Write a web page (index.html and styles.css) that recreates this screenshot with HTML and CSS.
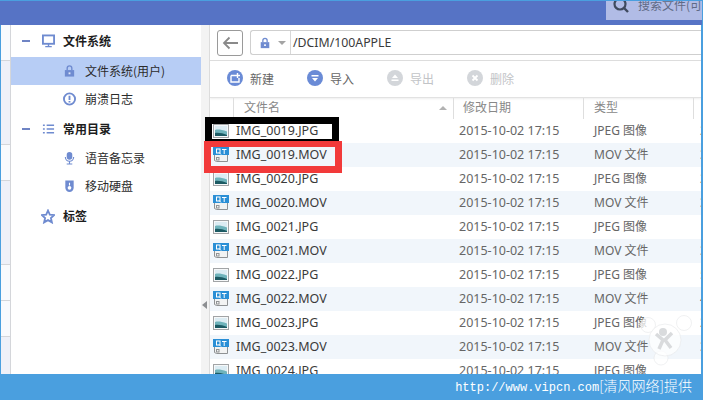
FILE: index.html
```html
<!DOCTYPE html>
<html lang="zh">
<head>
<meta charset="utf-8">
<title>文件系统</title>
<link rel="stylesheet" href="styles.css">
</head>
<body>
<svg class="defs" width="0" height="0" aria-hidden="true">
  <symbol id="jpg" viewBox="0 0 16 16">
    <rect x="0.500" y="1.500" width="15" height="13" fill="#f6f8f9" stroke="#a2a4a6"/>
    <rect x="2" y="3" width="12" height="10" fill="#dcecf3"/>
    <path d="M2 7c3-1 6-.5 12 1.500v4.500H2z" fill="#6fb3bb"/>
    <path d="M2 10c4-.5 8 .5 12 2v1H2z" fill="#1c5a63"/>
  </symbol>
  <symbol id="mov" viewBox="0 0 16 16">
    <path d="M1.500 7.500h13v7h-11l-2-1z" fill="#f2f3f3" stroke="#8f9294"/>
    <rect x="3.500" y="10.500" width="2.500" height="2.500" fill="none" stroke="#8f9294"/>
    <rect x="0" y="0" width="16" height="8" fill="#2a8fd6"/>
    <rect x="3.500" y="2" width="3.500" height="4" fill="none" stroke="#fff"/>
    <path d="M6 5.500l2 2" stroke="#fff" fill="none"/>
    <path d="M9 2.500h4.500M11.200 2.500v4.500" stroke="#fff" fill="none"/>
  </symbol>
</svg>

<div class="app">
  <header class="topbar">
    <div class="search">
      <svg class="search-icon" viewBox="0 0 16 16"><circle cx="7" cy="5" r="5.500" fill="none" stroke="#3f4a5e" stroke-width="2.200"/><path d="M11 9l4 4" stroke="#3f4a5e" stroke-width="2.400"/></svg>
      <span>搜索文件(可</span>
    </div>
  </header>

  <div class="body">
    <div class="rail">
      <i class="seg s36"></i><i class="seg alt s84"></i><i class="seg s36"></i><i class="seg alt s84"></i><i class="seg s36"></i><i class="seg s36"></i><i class="seg alt s38"></i>
    </div>

    <nav class="sidebar">
      <div class="group">
        <span class="dash"></span>
        <svg class="nav-icon" viewBox="0 0 14 14"><rect x="1" y="1" width="12" height="9" fill="none" stroke="#6f8bd0" stroke-width="2"/><path d="M7 10v3M3.500 13h7" stroke="#6f8bd0" stroke-width="1.500"/></svg>
        <span>文件系统</span>
      </div>
      <div class="item selected">
        <svg class="nav-icon" viewBox="0 0 14 14"><rect x="2" y="6" width="10" height="7" fill="#6f8bd0"/><path d="M4.500 6V4a2.500 2.500 0 0 1 5 0v2" fill="none" stroke="#6f8bd0" stroke-width="1.500"/><rect x="6" y="8.500" width="2" height="2" fill="#dfe6f7"/></svg>
        <span>文件系统(用户)</span>
      </div>
      <div class="item">
        <svg class="nav-icon" viewBox="0 0 14 14"><circle cx="7" cy="7" r="6" fill="none" stroke="#6f8bd0" stroke-width="2"/><path d="M7 3.500v4.500M7 9.200v1.600" stroke="#6f8bd0" stroke-width="2"/></svg>
        <span>崩溃日志</span>
      </div>
      <div class="group gap">
        <span class="dash"></span>
        <svg class="nav-icon" viewBox="0 0 14 14"><path d="M1 3h2M5 3h8M1 7h2M5 7h8M1 11h2M5 11h8" stroke="#6f8bd0" stroke-width="1.600"/></svg>
        <span>常用目录</span>
      </div>
      <div class="item voice">
        <svg class="nav-icon" viewBox="0 0 14 14"><rect x="4" y="0.500" width="6" height="8.500" rx="3" fill="#6f8bd0"/><path d="M2.500 6a4.500 4.500 0 0 0 9 0M7 10.500V13M4 13.500h6" fill="none" stroke="#6f8bd0" stroke-width="1.200"/></svg>
        <span>语音备忘录</span>
      </div>
      <div class="item">
        <svg class="nav-icon" viewBox="0 0 14 14"><path d="M2.500 1h9v8a4.500 4.500 0 0 1-9 0z" fill="#6f8bd0"/><circle cx="7" cy="9" r="2" fill="#fff"/><path d="M7 3.500v3" stroke="#fff" stroke-width="1.200"/></svg>
        <span>移动硬盘</span>
      </div>
      <div class="group gap">
        <span class="dash none"></span>
        <svg class="nav-icon star" viewBox="0 0 14 14"><path d="M7 1l1.800 4.100 4.500.4-3.400 3 1 4.400L7 10.600l-3.900 2.300 1-4.400-3.400-3 4.500-.4z" fill="none" stroke="#6f8bd0" stroke-width="1.800"/></svg>
        <span>标签</span>
      </div>
    </nav>

    <div class="gutter"><span class="collapse"></span></div>

    <main class="browser">
      <div class="pathbar">
        <button class="back" type="button" aria-label="返回">
          <svg viewBox="0 0 16 14" width="16" height="14"><path d="M7.500 1.500L2 7l5.500 5.500M2 7h14" fill="none" stroke="#8a8a8a" stroke-width="1.800"/></svg>
        </button>
        <div class="address">
          <svg class="addr-lock" viewBox="0 0 14 14"><rect x="2" y="6" width="10" height="7" fill="#6f8bd0"/><path d="M4.500 6V4a2.500 2.500 0 0 1 5 0v2" fill="none" stroke="#6f8bd0" stroke-width="1.500"/><rect x="6" y="8.500" width="2" height="2" fill="#fff"/></svg>
          <span class="addr-caret"></span>
          <span class="addr-path">/DCIM/100APPLE</span>
        </div>
      </div>

      <div class="toolbar">
        <div class="tool">
          <svg class="tool-icon" viewBox="0 0 16 16"><circle cx="8" cy="8" r="8" fill="#6a8bd6"/><path d="M4 5.500h4M4 5.500v6.500h8V8" fill="none" stroke="#fff" stroke-width="1.400"/><path d="M10.500 3v5M8 5.500h5" stroke="#fff" stroke-width="1.400"/></svg>
          <span>新建</span>
        </div>
        <div class="tool">
          <svg class="tool-icon" viewBox="0 0 16 16"><circle cx="8" cy="8" r="8" fill="#6a8bd6"/><rect x="4.500" y="5" width="7" height="1.500" fill="#fff"/><path d="M5 8h6l-3 3.500z" fill="#fff"/></svg>
          <span>导入</span>
        </div>
        <div class="tool off">
          <svg class="tool-icon" viewBox="0 0 16 16"><circle cx="8" cy="8" r="8" fill="#d3d6da"/><path d="M5 8h6L8 4.500z" fill="#fff"/><rect x="4.500" y="9.500" width="7" height="1.500" fill="#fff"/></svg>
          <span>导出</span>
        </div>
        <div class="tool off">
          <svg class="tool-icon" viewBox="0 0 16 16"><circle cx="8" cy="8" r="8" fill="#d3d6da"/><path d="M5.500 5.500l5 5M10.500 5.500l-5 5" stroke="#fff" stroke-width="1.800"/></svg>
          <span>删除</span>
        </div>
      </div>

      <div class="colhead">
        <div class="h name">文件名<span class="sort"></span></div>
        <div class="h date">修改日期</div>
        <div class="h type">类型</div>
        <div class="h size"></div>
      </div>

      <div class="rows">
        <div class="row"><svg class="ficon"><use href="#jpg"/></svg><span class="fname">IMG_0019.JPG</span><span class="fdate">2015-10-02 17:15</span><span class="ftype">JPEG 图像</span><span class="fsize">2</span></div>
        <div class="row"><svg class="ficon"><use href="#mov"/></svg><span class="fname">IMG_0019.MOV</span><span class="fdate">2015-10-02 17:15</span><span class="ftype">MOV 文件</span><span class="fsize">3</span></div>
        <div class="row"><svg class="ficon"><use href="#jpg"/></svg><span class="fname">IMG_0020.JPG</span><span class="fdate">2015-10-02 17:15</span><span class="ftype">JPEG 图像</span><span class="fsize">2</span></div>
        <div class="row"><svg class="ficon"><use href="#mov"/></svg><span class="fname">IMG_0020.MOV</span><span class="fdate">2015-10-02 17:15</span><span class="ftype">MOV 文件</span><span class="fsize">3</span></div>
        <div class="row"><svg class="ficon"><use href="#jpg"/></svg><span class="fname">IMG_0021.JPG</span><span class="fdate">2015-10-02 17:15</span><span class="ftype">JPEG 图像</span><span class="fsize">1</span></div>
        <div class="row"><svg class="ficon"><use href="#mov"/></svg><span class="fname">IMG_0021.MOV</span><span class="fdate">2015-10-02 17:15</span><span class="ftype">MOV 文件</span><span class="fsize">3</span></div>
        <div class="row"><svg class="ficon"><use href="#jpg"/></svg><span class="fname">IMG_0022.JPG</span><span class="fdate">2015-10-02 17:15</span><span class="ftype">JPEG 图像</span><span class="fsize">5</span></div>
        <div class="row"><svg class="ficon"><use href="#mov"/></svg><span class="fname">IMG_0022.MOV</span><span class="fdate">2015-10-02 17:15</span><span class="ftype">MOV 文件</span><span class="fsize">4</span></div>
        <div class="row"><svg class="ficon"><use href="#jpg"/></svg><span class="fname">IMG_0023.JPG</span><span class="fdate">2015-10-02 17:15</span><span class="ftype">JPEG 图像</span><span class="fsize">2</span></div>
        <div class="row"><svg class="ficon"><use href="#mov"/></svg><span class="fname">IMG_0023.MOV</span><span class="fdate">2015-10-02 17:15</span><span class="ftype">MOV 文件</span><span class="fsize">3</span></div>
        <div class="row"><svg class="ficon"><use href="#jpg"/></svg><span class="fname">IMG_0024.JPG</span><span class="fdate">2015-10-02 17:15</span><span class="ftype">JPEG 图像</span><span class="fsize">1</span></div>
      </div>
    </main>

    <!-- Highlight frames drawn over the first two files -->
    <div class="frame black"></div>
    <div class="frame red"></div>

    <!-- Site stamp in the lower right corner -->
    <svg class="stamp" viewBox="0 0 73 75" width="73" height="75">
      <g fill="#fff" fill-opacity=".72" stroke="#e6e8ea" stroke-opacity=".6">
        <circle cx="18" cy="25" r="7.500"/>
        <circle cx="54" cy="23" r="7.500"/>
        <circle cx="31" cy="58" r="7"/>
        <circle cx="35" cy="40" r="16"/>
      </g>
      <circle cx="33" cy="32" r="4" fill="#d9dbdd"/>
      <path d="M26 34l7 6-4 9M42 33l-7 7 6 8" fill="none" stroke="#d9dbdd" stroke-width="3.500"/>
    </svg>
  </div>

  <footer class="footer">http://www.vipcn.com<span class="cjk">[清风网络]提供</span></footer>
</div>
</body>
</html>
```

FILE: styles.css
```css
* { box-sizing: border-box; }

html, body {
  margin: 0;
  padding: 0;
  width: 703px;
  height: 400px;
  overflow: hidden;
  background: #fff;
}

body {
  font-family: "Noto Sans", "Noto Sans CJK SC", sans-serif;
  font-size: 12px;
  color: #333;
}

.defs { position: absolute; }

.app {
  display: flex;
  flex-direction: column;
  width: 703px;
  height: 400px;
}

/* Title strip */
.topbar {
  flex: 0 0 25px;
  background: #5673c5;
  border-top: 1px solid #4a9fdf;
  border-right: 1px solid #4a9fdf;
  display: flex;
  justify-content: flex-end;
  align-items: flex-start;
  overflow: hidden;
}

.search {
  width: 96px;
  height: 19px;
  background: #b1bce6;
  display: flex;
  gap: 9px;
  padding-left: 7px;
  overflow: hidden;
  white-space: nowrap;
  color: #5f6a85;
  line-height: 8px;
  font-family: "Noto Sans CJK SC", sans-serif;
}

.search-icon {
  width: 16px;
  height: 16px;
  flex: none;
  margin-top: -2px;
}

/* Main area */
.body {
  position: relative;
  flex: 1;
  display: flex;
  min-height: 0;
  border-left: 1px solid #4a9fdf;
  border-right: 2px solid #4a9fdf;
  overflow: hidden;
}

.rail {
  flex: 0 0 10px;
  display: flex;
  flex-direction: column;
  border-right: 1px solid #d4d6da;
}

.seg {
  display: block;
  background: #f9fafd;
  border-bottom: 1px solid #d4d6da;
}

.seg.alt { background: #eef0f8; }
.s36 { height: 36px; }
.s84 { height: 84px; }
.s38 { flex: 1; border-bottom: 0; }

/* Tree on the left */
.sidebar {
  flex: 0 0 190px;
  padding-top: 2px;
  font-family: "Noto Sans CJK SC", sans-serif;
  color: #2b2b2b;
}

.group, .item {
  display: flex;
  align-items: center;
  height: 28px;
}

.group span:last-child, .item span:last-child { margin-top: -2px; }

.group {
  font-weight: 700;
  color: #1d1d1d;
  padding-left: 11px;
}

.group .nav-icon { margin: 0 8px 0 12px; }

.dash {
  width: 8px;
  height: 2px;
  background: #6f84c4;
}

.dash.none { background: transparent; }

.item { padding-left: 52px; }
.item .nav-icon { margin-right: 9px; }
.item.selected { background: #b7cdf5; margin-top: 2px; }
.gap { margin-top: 2px; }
.voice { margin-top: 1px; }

.nav-icon {
  width: 13px;
  height: 14px;
  flex: none;
}

.group .nav-icon.star { width: 14px; height: 15px; margin: 0 8px 0 11px; }

.gutter {
  flex: 0 0 9px;
  background: #f3f3f3;
  border-right: 1px solid #dcdcdc;
  position: relative;
}

.collapse {
  position: absolute;
  left: 1px;
  top: 276px;
  border-style: solid;
  border-width: 4px 5px 4px 0;
  border-color: transparent #8d8f92 transparent transparent;
}

/* File browser */
.browser {
  flex: 1;
  min-width: 0;
  display: flex;
  flex-direction: column;
}

.pathbar {
  flex: 0 0 36px;
  display: flex;
  gap: 7px;
  padding: 5px 0 0 7px;
  border-bottom: 1px solid #dcdcdc;
}

.back {
  width: 26px;
  height: 26px;
  padding: 0;
  background: #fff;
  border: 1px solid #9a9a9a;
  border-radius: 3px;
  display: flex;
  align-items: center;
  justify-content: center;
}

.address {
  flex: 1;
  height: 25px;
  display: flex;
  align-items: center;
  border: 1px solid #cfcfcf;
  border-right: 0;
  border-radius: 3px 0 0 3px;
  padding-left: 8px;
}

.addr-lock { width: 12px; height: 14px; flex: none; }

.addr-caret {
  margin-left: 7px;
  border-style: solid;
  border-width: 4px 4px 0;
  border-color: #a4a4a4 transparent transparent;
}

.addr-path {
  margin-left: 4px;
  padding-left: 2px;
  height: 23px;
  line-height: 23px;
  border-left: 1px solid #d8d8d8;
  font-size: 12.3px;
  color: #3a3a3a;
}

.toolbar {
  flex: 0 0 37px;
  display: flex;
  align-items: center;
  padding: 0 0 2px 17px;
  border-bottom: 1px solid #e2e2e2;
  font-family: "Noto Sans CJK SC", sans-serif;
  color: #666;
  box-shadow: 0 1px 2px #eeeeee;
}

.tool {
  flex: 0 0 80px;
  display: flex;
  align-items: center;
  gap: 7px;
}

.tool.off { color: #c2c4c7; }
.tool-icon { width: 16px; height: 16px; flex: none; }

.colhead {
  flex: 0 0 21px;
  display: flex;
  padding-left: 23px;
  font-family: "Noto Sans CJK SC", sans-serif;
  color: #888;
  line-height: 18px;
}

.h {
  height: 21px;
  border-left: 1px solid #dedede;
  padding-left: 10px;
}

.h.name { flex: 0 0 220px; position: relative; }
.h.date { flex: 0 0 130px; padding-left: 9px; }
.h.type { flex: 0 0 110px; }
.h.size { flex: 1; }

.sort {
  position: absolute;
  right: 6px;
  top: 8px;
  border-style: solid;
  border-width: 0 4px 4px;
  border-color: transparent transparent #b2b2b2;
}

.rows { flex: 1; overflow: hidden; }

.row {
  display: flex;
  align-items: center;
  height: 24px;
  padding-left: 3px;
  white-space: nowrap;
  font-size: 12.5px;
}

.row span { margin-top: -2px; }
.row:nth-child(even) { background: #f1f6fb; }

.ficon { width: 16px; height: 16px; flex: none; }
.fname { flex: 0 0 223px; margin-left: 7px; color: #3a3a3a; }
.fdate { flex: 0 0 135px; color: #666; }
.ftype { flex: 0 0 106px; color: #666; font-size: 12px; }
.fsize { color: #666; }

/* Highlight frames */
.frame {
  position: absolute;
  background: transparent;
  border-style: solid;
}

.frame.black {
  left: 204px;
  top: 92px;
  width: 134px;
  height: 25px;
  border-color: #000;
  border-width: 7px 7px 3px;
}

.frame.red {
  left: 203px;
  top: 116px;
  width: 138px;
  height: 32px;
  border-color: #f23a3a;
  border-width: 6px 7px 7px;
}

.stamp {
  position: absolute;
  left: 629px;
  top: 275px;
}

.footer {
  flex: 0 0 25px;
  background: #4a9fdf;
  color: #fff;
  text-align: right;
  padding-right: 11px;
  font-family: "Liberation Mono", monospace;
  font-size: 12px;
  line-height: 23px;
  white-space: nowrap;
}

.footer .cjk {
  font-family: "Noto Sans CJK SC", sans-serif;
  font-size: 14px;
  font-weight: 300;
}
```
